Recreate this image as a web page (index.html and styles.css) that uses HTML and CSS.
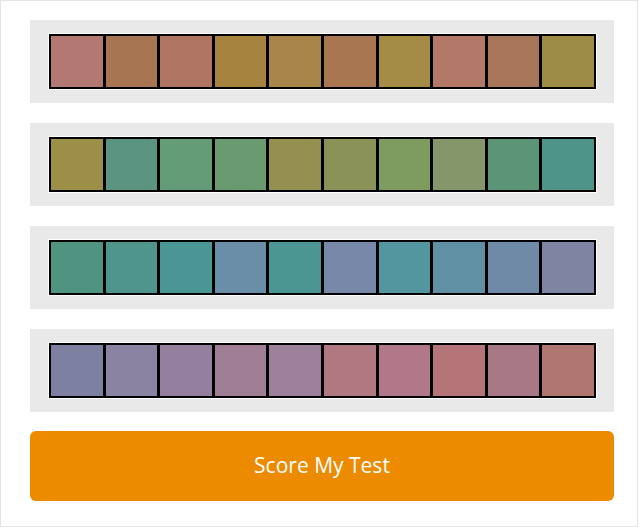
FILE: index.html
```html
<!DOCTYPE html>
<html>
<head>
<meta charset="utf-8">
<link rel="stylesheet" href="styles.css">
</head>
<body>
<div class="frame">
  <div class="panel">
    <div class="strip">
      <div class="sq c1a"></div><div class="sq c1b"></div><div class="sq c1c"></div><div class="sq c1d"></div><div class="sq c1e"></div>
      <div class="sq c1f"></div><div class="sq c1g"></div><div class="sq c1h"></div><div class="sq c1i"></div><div class="sq c1j"></div>
    </div>
  </div>
  <div class="panel">
    <div class="strip">
      <div class="sq c2a"></div><div class="sq c2b"></div><div class="sq c2c"></div><div class="sq c2d"></div><div class="sq c2e"></div>
      <div class="sq c2f"></div><div class="sq c2g"></div><div class="sq c2h"></div><div class="sq c2i"></div><div class="sq c2j"></div>
    </div>
  </div>
  <div class="panel">
    <div class="strip">
      <div class="sq c3a"></div><div class="sq c3b"></div><div class="sq c3c"></div><div class="sq c3d"></div><div class="sq c3e"></div>
      <div class="sq c3f"></div><div class="sq c3g"></div><div class="sq c3h"></div><div class="sq c3i"></div><div class="sq c3j"></div>
    </div>
  </div>
  <div class="panel">
    <div class="strip">
      <div class="sq c4a"></div><div class="sq c4b"></div><div class="sq c4c"></div><div class="sq c4d"></div><div class="sq c4e"></div>
      <div class="sq c4f"></div><div class="sq c4g"></div><div class="sq c4h"></div><div class="sq c4i"></div><div class="sq c4j"></div>
    </div>
  </div>
  <button class="score">Score My Test</button>
</div>
</body>
</html>
```
FILE: styles.css
```css
html, body {
  margin: 0;
  padding: 0;
  background: #ffffff;
}
.frame {
  box-sizing: border-box;
  width: 638px;
  height: 527px;
  border: 1px solid #e4e4e4;
  padding: 19px 0 0 29px;
  display: flex;
  flex-direction: column;
  gap: 20px;
}
.panel {
  box-sizing: border-box;
  width: 584px;
  height: 83px;
  background: #e9e9e9;
  padding: 14px 18px 14px 19px;
}
.strip {
  box-sizing: border-box;
  width: 547px;
  height: 55px;
  background: #000;
  padding: 2px;
  display: flex;
  gap: 3px;
  box-shadow: 0 0 0 1px #ffffff;
}
.sq {
  flex: 1;
}
.score {
  margin-top: -1px;
  width: 584px;
  height: 70px;
  border: none;
  border-radius: 6px;
  background: #ec8a00;
  color: #ffffff;
  font-family: "Open Sans", "Noto Sans", sans-serif;
  font-size: 21px;
  padding: 0 0 2px 0;
}
.c1a { background: #b47872; }
.c1b { background: #a87552; }
.c1c { background: #b07562; }
.c1d { background: #a6843f; }
.c1e { background: #a8854a; }
.c1f { background: #a87650; }
.c1g { background: #a48c46; }
.c1h { background: #b47868; }
.c1i { background: #a8775a; }
.c1j { background: #9c8c46; }
.c2a { background: #9c9048; }
.c2b { background: #5b9480; }
.c2c { background: #659c78; }
.c2d { background: #6a9a70; }
.c2e { background: #939050; }
.c2f { background: #8a9258; }
.c2g { background: #7f9c60; }
.c2h { background: #84966a; }
.c2i { background: #5c9478; }
.c2j { background: #4e9488; }
.c3a { background: #4e9480; }
.c3b { background: #4f958c; }
.c3c { background: #4a9694; }
.c3d { background: #6a8ea8; }
.c3e { background: #4b9692; }
.c3f { background: #7888a8; }
.c3g { background: #5496a0; }
.c3h { background: #5f90a4; }
.c3i { background: #6e8aa6; }
.c3j { background: #7e84a2; }
.c4a { background: #7e80a2; }
.c4b { background: #8a84a2; }
.c4c { background: #94809e; }
.c4d { background: #a07e96; }
.c4e { background: #9c809c; }
.c4f { background: #b07880; }
.c4g { background: #b07888; }
.c4h { background: #b47478; }
.c4i { background: #a87886; }
.c4j { background: #b07670; }
```
